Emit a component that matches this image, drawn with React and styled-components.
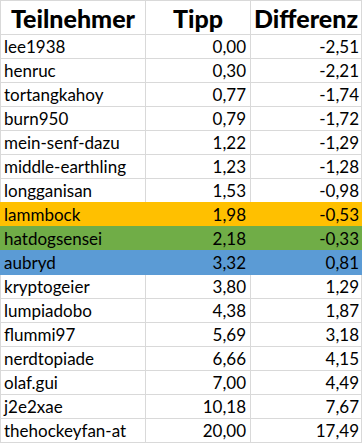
import React from 'react';
import styled, { createGlobalStyle } from 'styled-components';

const GlobalStyle = createGlobalStyle`
  html, body {
    margin: 0;
    padding: 0;
    background: #ffffff;
  }
`;

const grid = '#d9d9d9';

const fills = {
  orange: '#ffc000',
  green: '#70ad47',
  blue: '#5b9bd5',
};

const Sheet = styled.div`
  display: grid;
  grid-template-columns: 145px 105px 111px;
  width: 361px;
  border-top: 1px solid ${grid};
  border-left: 1px solid ${grid};
  font-family: Lato, "Liberation Sans", sans-serif;
  color: #000;
`;

const HeadCell = styled.div`
  height: 33px;
  display: flex;
  align-items: center;
  justify-content: center;
  font-size: 25px;
  font-weight: 900;
  border-right: 1px solid ${grid};
  border-bottom: 1px solid ${grid};
  white-space: nowrap;
`;

// filled rows paint over the grid line above them, like Excel does
const Cell = styled.div`
  box-sizing: border-box;
  height: ${(p) => (p.$fill ? '25px' : '24px')};
  margin-top: ${(p) => (p.$fill ? '-1px' : '0')};
  margin-left: ${(p) => (p.$fill && p.$first ? '-1px' : '0')};
  display: flex;
  align-items: center;
  justify-content: ${(p) => (p.$pad ? 'flex-end' : 'flex-start')};
  padding-left: ${(p) => (p.$pad ? '0' : p.$fill ? '4px' : '3px')};
  padding-right: ${(p) => p.$pad || '0'};
  padding-top: ${(p) => (p.$fill ? '1px' : '0')};
  font-size: 17px;
  white-space: nowrap;
  background: ${(p) => fills[p.$fill] || 'transparent'};
  border-right: 1px solid ${(p) => fills[p.$fill] || grid};
  border-bottom: 1px solid ${(p) => fills[p.$fill] || grid};
`;

const rows = [
  ['lee1938', '0,00', '-2,51'],
  ['henruc', '0,30', '-2,21'],
  ['tortangkahoy', '0,77', '-1,74'],
  ['burn950', '0,79', '-1,72'],
  ['mein-senf-dazu', '1,22', '-1,29'],
  ['middle-earthling', '1,23', '-1,28'],
  ['longganisan', '1,53', '-0,98'],
  ['lammbock', '1,98', '-0,53', 'orange'],
  ['hatdogsensei', '2,18', '-0,33', 'green'],
  ['aubryd', '3,32', '0,81', 'blue'],
  ['kryptogeier', '3,80', '1,29'],
  ['lumpiadobo', '4,38', '1,87'],
  ['flummi97', '5,69', '3,18'],
  ['nerdtopiade', '6,66', '4,15'],
  ['olaf.gui', '7,00', '4,49'],
  ['j2e2xae', '10,18', '7,67'],
  ['thehockeyfan-at', '20,00', '17,49'],
];

export default function App() {
  return (
    <>
      <GlobalStyle />
      <Sheet>
        <HeadCell>Teilnehmer</HeadCell>
        <HeadCell>Tipp</HeadCell>
        <HeadCell>Differenz</HeadCell>
        {rows.map(([name, tipp, diff, fill]) => (
          <React.Fragment key={name}>
            <Cell $first $fill={fill}>{name}</Cell>
            <Cell $pad="4px" $fill={fill}>{tipp}</Cell>
            <Cell $pad="2px" $fill={fill}>{diff}</Cell>
          </React.Fragment>
        ))}
      </Sheet>
    </>
  );
}
